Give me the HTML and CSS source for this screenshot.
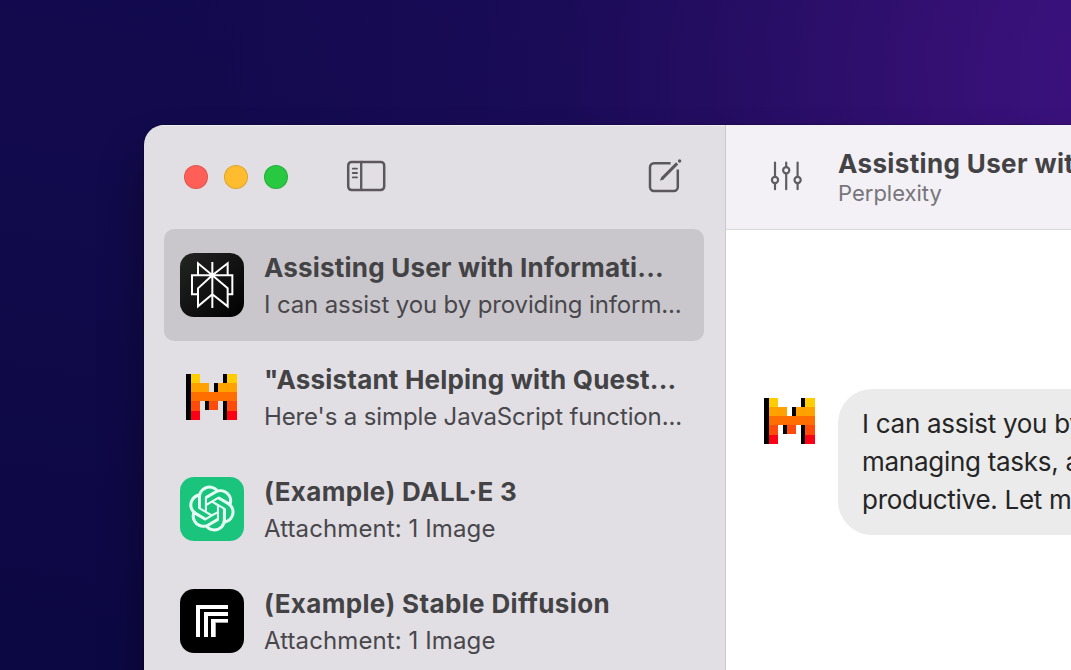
FILE: index.html
```html
<!DOCTYPE html>
<html lang="en">
<head>
  <meta charset="UTF-8" />
  <title>Chats</title>
  <link rel="stylesheet" href="styles.css">
</head>

<body>

  <svg class="defs" width="0" height="0">
    <symbol id="mistral" viewBox="0 0 192 192" shape-rendering="crispEdges">
      <path fill="#000" d="M19 27h15v138H19zM129 27h14v27h-14zM102 54h13v27h-13zM75 108h13v28H75zM129 108h14v57h-14z" />
      <path fill="#ffcd00" d="M33 27h27v27H33zM142 27h29v27h-29z" />
      <path fill="#ffa200" d="M33 54h54v27H33zM115 54h56v27h-56z" />
      <path fill="#ff6e00" d="M33 81h138v27H33z" />
      <path fill="#ff4a09" d="M33 108h27v29H33zM87 108h28v28H87zM142 108h29v29h-29z" />
      <path fill="#fe0016" d="M33 137h27v28H33zM142 137h29v28h-29z" />
    </symbol>
  </svg>

  <div class="window">
    <aside class="sidebar">
      <div class="toolbar">
        <div class="lights">
          <span class="light red"></span>
          <span class="light yellow"></span>
          <span class="light green"></span>
        </div>
        <svg class="icon-sidebar" width="40" height="32" viewBox="0 0 40 32" fill="none" stroke="#5b575d" stroke-linecap="round">
          <rect x="2.2" y="2" width="36" height="28" rx="3.4" stroke-width="2.5" />
          <path d="M15.2 2v28" stroke-width="2.3" />
          <path d="M6.8 8.6h4.2M6.8 13h4.2M6.8 17.4h4.2" stroke-width="1.9" />
        </svg>
        <svg class="icon-compose" width="36" height="36" viewBox="0 0 36 36" fill="none" stroke="#5b575d" stroke-width="2.5">
          <path d="M23.6 6.2H7a4 4 0 0 0-4 4V30a4 4 0 0 0 4 4h19.8a4 4 0 0 0 4-4V12.5" />
          <path d="M13 23.8l1.1-3.6 2.6 2.3z" fill="#5b575d" stroke="none" />
          <path d="M30.2 6.4L15 21.6" stroke-width="3" />
          <circle cx="32.6" cy="4" r="1.7" fill="#5b575d" stroke="none" />
        </svg>
      </div>

      <div class="chats">
        <div class="chat selected">
          <svg class="avatar" viewBox="0 0 192 192">
            <defs>
              <linearGradient id="dark" x1="0" y1="0" x2="1" y2="1">
                <stop offset="0" stop-color="#232523" />
                <stop offset="1" stop-color="#000" />
              </linearGradient>
            </defs>
            <rect width="192" height="192" rx="42" fill="url(#dark)" />
            <path fill="none" stroke="#fff" stroke-width="6" d="M97 27v138M54 67V31l43 36 46-36v36M97 67L54 106v54l43-36 46 36v-54zM54 124H36V67h121v57h-14" />
          </svg>
          <div class="info">
            <div class="title">Assisting User with Informati...</div>
            <div class="preview">I can assist you by providing inform...</div>
          </div>
        </div>

        <div class="chat">
          <svg class="avatar"><use href="#mistral" /></svg>
          <div class="info">
            <div class="title">"Assistant Helping with Quest...</div>
            <div class="preview">Here's a simple JavaScript function...</div>
          </div>
        </div>

        <div class="chat">
          <svg class="avatar" viewBox="0 0 64 64">
            <rect width="64" height="64" rx="14" fill="#1bc47d" />
            <path transform="translate(9 8.6) scale(1.91)" fill="#e6fff4" d="M22.2819 9.8211a5.9847 5.9847 0 0 0-.5157-4.9108 6.0462 6.0462 0 0 0-6.5098-2.9A6.0651 6.0651 0 0 0 4.9807 4.1818a5.9847 5.9847 0 0 0-3.9977 2.9 6.0462 6.0462 0 0 0 .7427 7.0966 5.98 5.98 0 0 0 .511 4.9107 6.051 6.051 0 0 0 6.5146 2.9001A5.9847 5.9847 0 0 0 13.2599 24a6.0557 6.0557 0 0 0 5.7718-4.2058 5.9894 5.9894 0 0 0 3.9977-2.9001 6.0557 6.0557 0 0 0-.7475-7.0729zm-9.022 12.6081a4.4755 4.4755 0 0 1-2.8764-1.0408l.1419-.0804 4.7783-2.7582a.7948.7948 0 0 0 .3927-.6813v-6.7369l2.02 1.1686a.071.071 0 0 1 .038.052v5.5826a4.504 4.504 0 0 1-4.4945 4.4944zm-9.6607-4.1254a4.4708 4.4708 0 0 1-.5346-3.0137l.142.0852 4.783 2.7582a.7712.7712 0 0 0 .7806 0l5.8428-3.3685v2.3324a.0804.0804 0 0 1-.0332.0615L9.74 19.9502a4.4992 4.4992 0 0 1-6.1408-1.6464zM2.3408 7.8956a4.485 4.485 0 0 1 2.3655-1.9728V11.6a.7664.7664 0 0 0 .3879.6765l5.8144 3.3543-2.0201 1.1685a.0757.0757 0 0 1-.071 0l-4.8303-2.7865A4.504 4.504 0 0 1 2.3408 7.872zm16.5963 3.8558L13.1038 8.364 15.1192 7.2a.0757.0757 0 0 1 .071 0l4.8303 2.7913a4.4944 4.4944 0 0 1-.6765 8.1042v-5.6772a.79.79 0 0 0-.407-.667zm2.0107-3.0231l-.142-.0852-4.7735-2.7818a.7759.7759 0 0 0-.7854 0L9.409 9.2297V6.8974a.0662.0662 0 0 1 .0284-.0615l4.8303-2.7866a4.4992 4.4992 0 0 1 6.6802 4.66zM8.3065 12.863l-2.02-1.1638a.0804.0804 0 0 1-.038-.0567V6.0742a4.4992 4.4992 0 0 1 7.3757-3.4537l-.142.0805L8.704 5.459a.7948.7948 0 0 0-.3927.6813zm1.0976-2.3654l2.602-1.4998 2.6069 1.4998v2.9994l-2.5974 1.4997-2.6067-1.4997Z" />
          </svg>
          <div class="info">
            <div class="title wide">(Example) DALL·E 3</div>
            <div class="preview wide">Attachment: 1 Image</div>
          </div>
        </div>

        <div class="chat">
          <svg class="avatar" viewBox="0 0 192 192">
            <rect width="192" height="192" rx="42" fill="#000" />
            <path fill="#888" d="M105 99h39v3h-36v42h-3z" />
            <path fill="#fff" d="M48 48h96v12H60v84H48zM72 69h72v12H84v63H72zM93 90h51v10h-38v44H93z" />
          </svg>
          <div class="info">
            <div class="title wide">(Example) Stable Diffusion</div>
            <div class="preview wide">Attachment: 1 Image</div>
          </div>
        </div>
      </div>
    </aside>

    <main class="main">
      <header class="header">
        <svg class="icon-sliders" width="32" height="32" viewBox="0 0 32 32" fill="none" stroke="#5f5c63" stroke-width="2.2" stroke-linecap="round">
          <path d="M5 2.6v14M5 23.4v5.8M16.2 2.6v4.2M16.2 13.6v15.6M27.6 2.6v14M27.6 23.4v5.8" />
          <circle cx="5" cy="20" r="3.1" />
          <circle cx="16.2" cy="10.2" r="3.1" />
          <circle cx="27.6" cy="20" r="3.1" />
        </svg>
        <div class="heading">
          <div class="title wide">Assisting User with Information</div>
          <div class="model">Perplexity</div>
        </div>
      </header>

      <div class="message">
        <svg class="avatar"><use href="#mistral" /></svg>
        <div class="bubble">
          I can assist you by providing information,<br>
          managing tasks, and helping you stay<br>
          productive. Let me know what you need.
        </div>
      </div>
    </main>
  </div>

</body>
</html>
```
FILE: styles.css
```css
body {
  box-sizing: border-box;
  margin: 0;
  height: 670px;
  padding: 125px 0 0 144px;
  overflow: hidden;
  font-family: Inter, "Liberation Sans", sans-serif;
  background: radial-gradient(ellipse 1000px 900px at 1180px 80px, #3f1284 0%, rgba(58, 17, 122, 0.9) 20%, rgba(46, 15, 108, 0.75) 42%, rgba(34, 13, 96, 0.5) 62%, rgba(24, 11, 84, 0) 100%),
    linear-gradient(190deg, #130a50 0%, #110a4b 45%, #0c0843 100%);
}

.defs {
  display: block;
}

.window {
  display: flex;
  width: 1300px;
  height: 700px;
  border-radius: 20px;
  overflow: hidden;
  box-shadow: 0 0 2px rgba(0, 0, 0, 0.6), 0 30px 44px rgba(0, 0, 0, 0.36);
}

.sidebar {
  box-sizing: border-box;
  width: 582px;
  flex: none;
  background: #e1dfe4;
  border-right: 1px solid #cac8cd;
  box-shadow: inset 0 1px 0 #efedf2;
}

.toolbar {
  display: flex;
  align-items: center;
  height: 104px;
  padding: 0 42px 0 40px;
}

.lights {
  display: flex;
  gap: 16px;
}

.light {
  box-sizing: border-box;
  width: 24px;
  height: 24px;
  border-radius: 50%;
  border: 1px solid rgba(0, 0, 0, 0.12);
}

.red { background: #ff5f57; }
.yellow { background: #febc2e; }
.green { background: #28c840; }

.icon-sidebar {
  margin: 0 0 2px 58px;
}

.icon-compose {
  margin: 0 0 4px auto;
}

.chats {
  padding: 0 21px 0 20px;
}

.chat {
  display: flex;
  box-sizing: border-box;
  height: 112px;
  padding: 24px 16px;
  gap: 20px;
  border-radius: 10px;
}

.selected {
  background: #c9c7cc;
}

.avatar {
  width: 64px;
  height: 64px;
  flex: none;
}

.info {
  margin-top: -4px;
  white-space: nowrap;
}

.title {
  font-size: 26px;
  font-weight: 700;
  line-height: 38px;
  letter-spacing: 0.2px;
  color: #434245;
}

.title.wide {
  letter-spacing: 0.36px;
}

.preview {
  font-size: 24px;
  line-height: 36px;
  letter-spacing: -0.13px;
  color: #49474c;
}

.preview.wide {
  letter-spacing: 0.1px;
}

.main {
  flex: 1;
  background: #fff;
}

.header {
  display: flex;
  box-sizing: border-box;
  height: 105px;
  padding: 20px 0 0 44px;
  background: #f3f1f6;
  border-bottom: 1px solid #d9d7dc;
  white-space: nowrap;
}

.icon-sliders {
  margin-top: 15px;
}

.heading {
  margin-left: 36px;
}

.model {
  margin-top: -6px;
  font-size: 22px;
  line-height: 32px;
  color: #77757a;
}

.message {
  display: flex;
  padding: 159px 0 0 32px;
  gap: 16px;
}

.bubble {
  padding: 16px 24px;
  border-radius: 34px;
  background: #ebebeb;
  color: #252525;
  font-size: 26px;
  line-height: 38px;
  letter-spacing: -0.28px;
  white-space: nowrap;
}
```
